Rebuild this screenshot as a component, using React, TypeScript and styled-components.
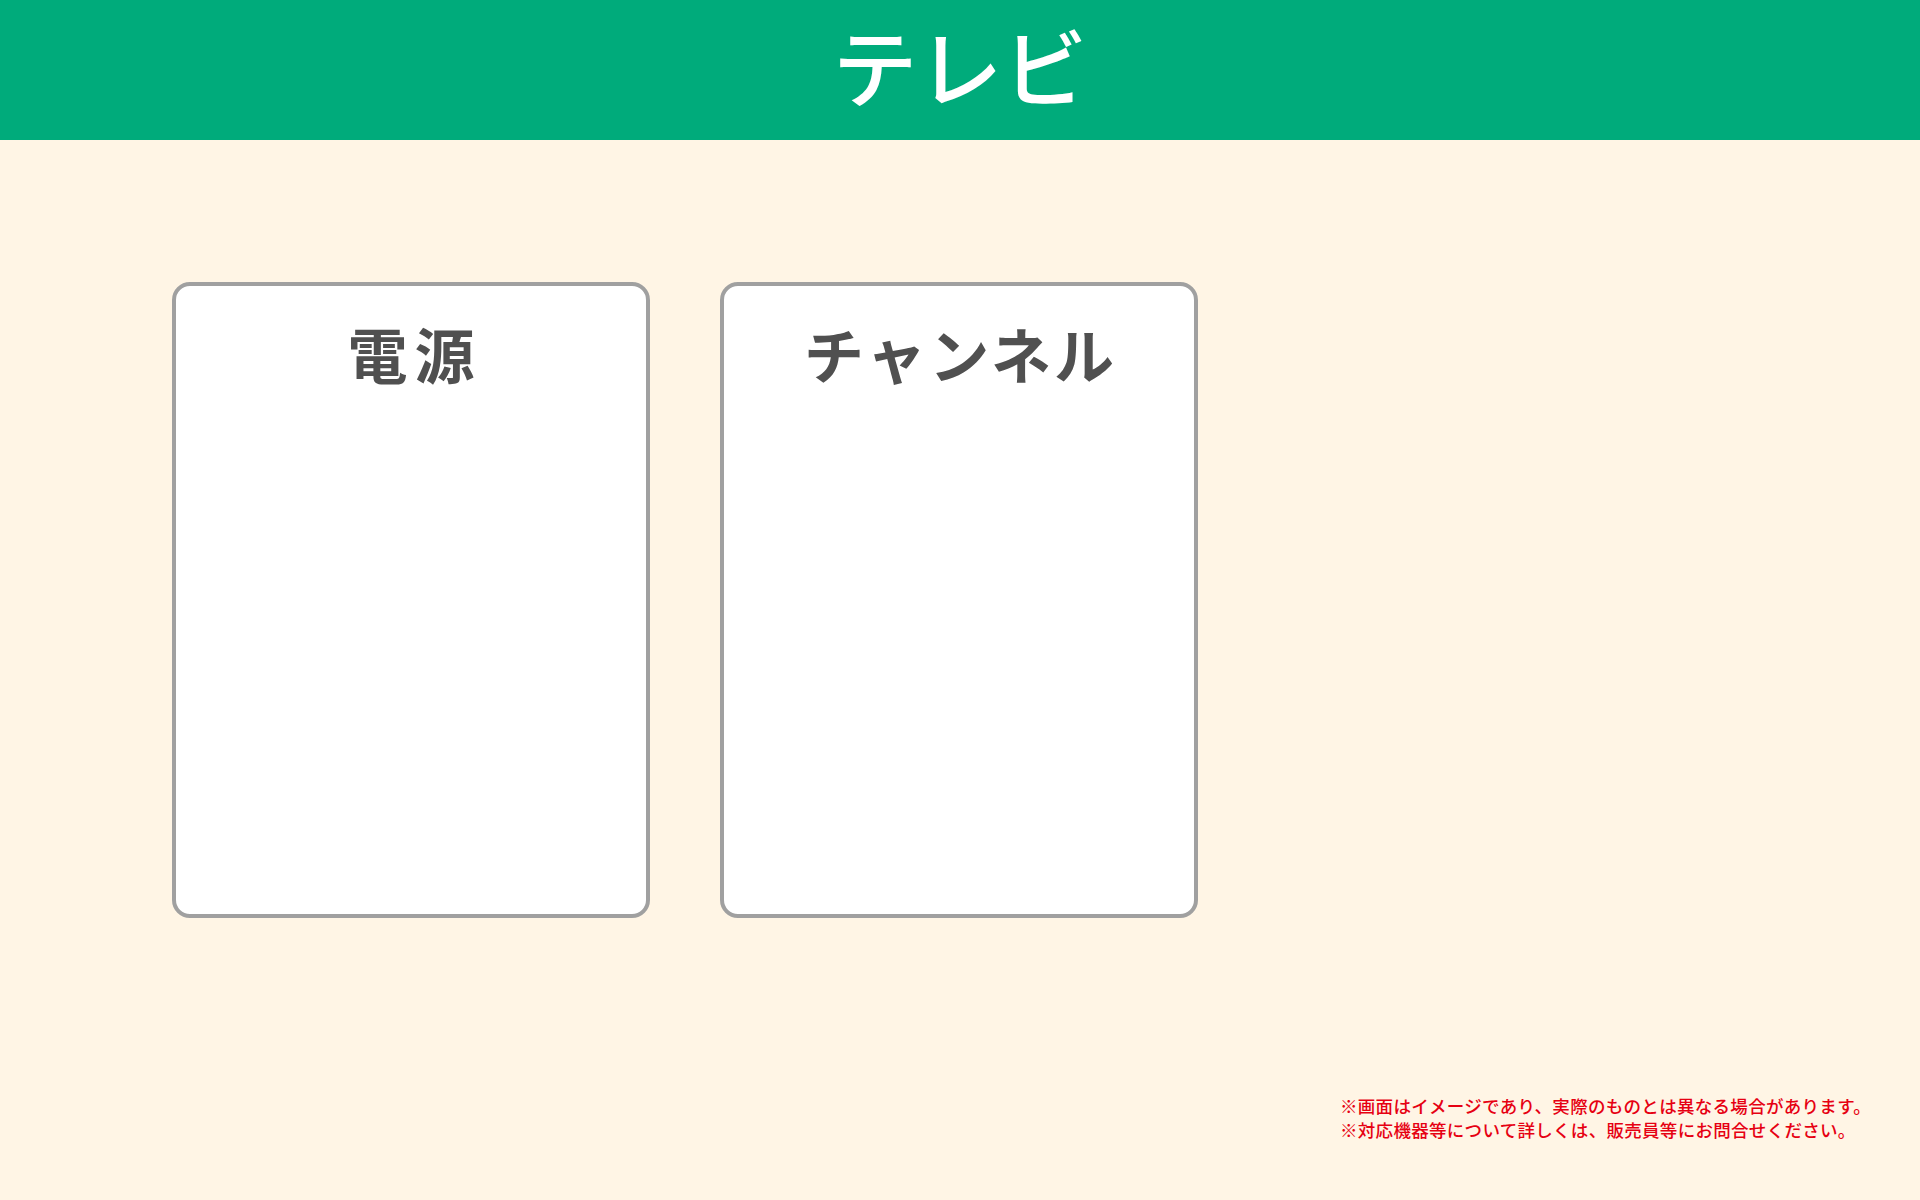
import React from "react";
import styled, { createGlobalStyle } from "styled-components";

const GlobalStyle = createGlobalStyle`
  html, body {
    margin: 0;
    padding: 0;
    background: #fff5e5;
  }
  body {
    font-family: "Noto Sans CJK JP", "Noto Sans", sans-serif;
  }
`;

const Page = styled.div`
  min-height: 1200px;
  display: flex;
  flex-direction: column;
  background: #fff5e5;
`;

const Header = styled.header`
  height: 140px;
  background: #00ab7b;
  display: flex;
  align-items: center;
  justify-content: center;
`;

const HeaderTitle = styled.h1`
  margin: 0;
  color: #ffffff;
  font-size: 85px;
  font-weight: 500;
  line-height: 1;
  padding-bottom: 13px;
`;

const Main = styled.main`
  flex: 1;
  display: flex;
  flex-direction: column;
  padding: 142px 0 0 172px;
`;

const CardRow = styled.div`
  display: flex;
  gap: 70px;
`;

const Card = styled.section`
  box-sizing: border-box;
  width: 478px;
  height: 636px;
  background: #ffffff;
  border: 4.5px solid #a0a0a0;
  border-radius: 18px;
  display: flex;
  flex-direction: column;
  align-items: center;
  padding-top: 37px;
`;

const CardTitle = styled.h2<{ $spacing: number }>`
  margin: 0;
  color: #505050;
  font-size: 60px;
  font-weight: 700;
  line-height: 1;
  letter-spacing: ${(p) => p.$spacing}px;
  padding-left: ${(p) => p.$spacing}px;
`;

const Notes = styled.footer`
  align-self: flex-end;
  width: 540px;
  margin: 0 40px 58px 0;
  color: #e60012;
  font-size: 17.5px;
  font-weight: 500;
  letter-spacing: 0.3px;
  line-height: 24px;
`;

const NoteLine = styled.p`
  margin: 0;
  white-space: nowrap;
`;

export default function App() {
  return (
    <Page>
      <GlobalStyle />
      <Header>
        <HeaderTitle>テレビ</HeaderTitle>
      </Header>
      <Main>
        <CardRow>
          <Card>
            <CardTitle $spacing={7}>電源</CardTitle>
          </Card>
          <Card>
            <CardTitle $spacing={3}>チャンネル</CardTitle>
          </Card>
        </CardRow>
      </Main>
      <Notes>
        <NoteLine>※画面はイメージであり、実際のものとは異なる場合があります。</NoteLine>
        <NoteLine>※対応機器等について詳しくは、販売員等にお問合せください。</NoteLine>
      </Notes>
    </Page>
  );
}
